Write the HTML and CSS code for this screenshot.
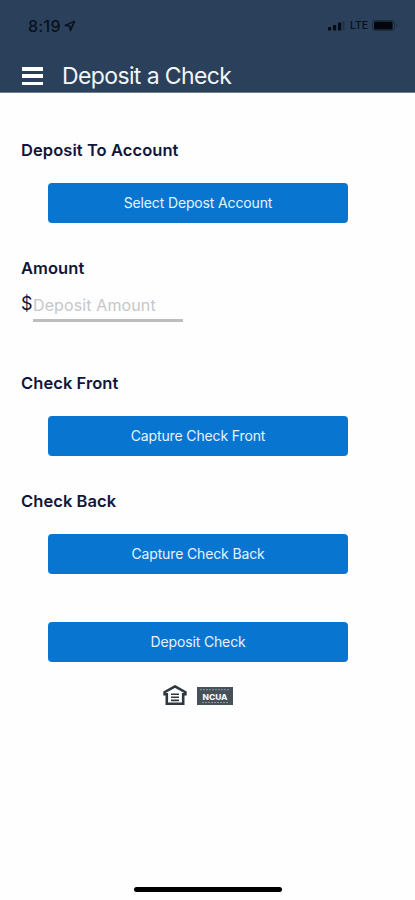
FILE: index.html
```html
<!DOCTYPE html>
<html lang="en">
<head>
<meta charset="utf-8">
<meta name="viewport" content="width=device-width, initial-scale=1">
<title>Deposit a Check</title>
<link rel="stylesheet" href="styles.css">
</head>
<body>
<div class="screen">
  <header class="header">
    <div class="status">
      <div class="status-time">
        <span class="time">8:19</span>
        <svg class="location" viewBox="0 0 12 12"><path d="M1.2 5.4 10.4 1.4 6.4 10.6 5.8 6.1Z"/></svg>
      </div>
      <div class="status-system">
        <svg class="signal" viewBox="0 0 17 10"><rect x="0" y="6" width="3.2" height="3.5" rx=".8"/><rect x="5" y="4" width="3.2" height="5.5" rx=".8"/><rect x="10" y="1.5" width="3.2" height="8" rx=".8"/><rect class="faint" x="14.6" y="0" width="2" height="9.5" rx=".8"/></svg>
        <span class="network">LTE</span>
        <svg class="battery" viewBox="0 0 26 11"><rect class="shell" x=".5" y=".5" width="22" height="10" rx="2.5"/><rect x="2" y="1.6" width="18.6" height="7.8" rx="1.2"/><path class="faint" d="M24 3.8c2 .5 2 2.900 0 3.400z"/></svg>
      </div>
    </div>
    <div class="titlebar">
      <button class="menu" aria-label="Menu"><i></i><i></i><i></i></button>
      <h1 class="title">Deposit a Check</h1>
    </div>
  </header>
  <main class="form">
    <section class="field">
      <h2 class="label">Deposit To Account</h2>
      <button class="action">Select Depost Account</button>
    </section>
    <section class="field amount">
      <h2 class="label">Amount</h2>
      <div class="amount-row">
        <span class="currency">$</span>
        <input class="amount-input" type="text" placeholder="Deposit Amount" aria-label="Deposit Amount">
      </div>
    </section>
    <section class="field">
      <h2 class="label">Check Front</h2>
      <button class="action">Capture Check Front</button>
    </section>
    <section class="field">
      <h2 class="label">Check Back</h2>
      <button class="action">Capture Check Back</button>
    </section>
    <button class="action submit">Deposit Check</button>
    <div class="badges">
      <svg class="housing" viewBox="0 0 24 21"><path class="roof" d="M1.600 9.300V7.200L12 1.400 22.400 7.200V9.300H20.200V18.800H3.800V9.300Z"/><path class="lines" d="M8 9.200h8M8 12.300h8M8 15.400h8"/></svg>
      <svg class="ncua" viewBox="0 0 36 18"><rect class="plate" width="36" height="18"/><path class="fine" d="M3 2.700h30M5 15.500h26"/><text x="18" y="12.700" text-anchor="middle" textLength="25" lengthAdjust="spacingAndGlyphs">NCUA</text></svg>
    </div>
  </main>
  <footer class="home"><div class="home-bar"></div></footer>
</div>
</body>
</html>
```
FILE: styles.css
```css
* { box-sizing: border-box; }
body { margin: 0; font-family: Inter, "Liberation Sans", sans-serif; color: #10163a; background: #fefefe; }
button { font: inherit; border: 0; padding: 0; }
h1, h2 { margin: 0; }
.screen { width: 415px; height: 900px; display: flex; flex-direction: column; overflow: hidden; }
.header { height: 93px; flex: none; background: #2b405b; border-bottom: 1px solid #6f7d8d; }
.status { height: 58px; padding: 15px 17px 0 28px; display: flex; justify-content: space-between; color: #07101b; }
.status-time, .status-system { height: 21px; display: flex; align-items: center; }
.time { font-size: 16px; font-weight: 500; letter-spacing: .3px; width: 36px; white-space: nowrap; }
.location { width: 12px; height: 12px; fill: none; stroke: #07101b; stroke-width: 1.5; stroke-linejoin: round; }
.signal { width: 17px; height: 10px; margin-right: 5px; fill: #050a12; }
.network { font-size: 10.500px; font-weight: 500; width: 22px; }
.battery { width: 26px; height: 11px; fill: #02060b; }
.shell { fill: none; stroke: #1c2c3f; }
.faint { fill: #203247; }
.titlebar { height: 35px; padding: 1px 0 0 22px; display: flex; align-items: center; }
.menu { width: 21px; height: 18px; display: flex; flex-direction: column; justify-content: space-between; background: none; }
.menu i { display: block; height: 3.500px; background: #fff; }
.title { margin-left: 19px; font-size: 23px; line-height: 34px; font-weight: 400; letter-spacing: -.62px; color: #f2f5f9; white-space: nowrap; }
.form { flex: 1; padding: 45px 21px 0; }
.field { height: 118px; }
.amount { height: 115px; }
.label { height: 24px; line-height: 24px; font-size: 16.500px; font-weight: 600; letter-spacing: .07px; white-space: nowrap; }
.action { display: block; width: 300px; height: 40px; margin: 21px 0 0 27px; border-radius: 4px; background: #0875d1; color: #e6f3ff; font-size: 14px; line-height: 40px; letter-spacing: -.14px; text-align: center; }
.amount-row { display: flex; height: 42px; }
.currency { width: 12px; font-size: 18px; line-height: 48px; }
.amount-input { width: 150px; height: 42px; border: 0; border-bottom: 3px solid #bdbdbd; border-radius: 0; padding: 10px 0 0; background: transparent; font: 400 16px Inter, "Liberation Sans", sans-serif; letter-spacing: .12px; outline: 0; }
.amount-input::placeholder { color: #c6c6c8; opacity: 1; }
.submit { margin-top: 15px; }
.badges { display: flex; align-items: center; gap: 10px; margin: 23px 0 0 142px; }
.housing { width: 24px; height: 21px; fill: none; stroke: #2d3742; }
.roof { stroke-width: 2.600; }
.lines { stroke-width: 1.600; }
.ncua { width: 36px; height: 18px; }
.plate { fill: #47515c; }
.fine { fill: none; stroke: #8b949c; stroke-width: 1; stroke-dasharray: 2 1; }
.ncua text { fill: #f2f4f5; font: 800 8px Inter, sans-serif; }
.home { height: 13px; flex: none; display: flex; justify-content: center; }
.home-bar { width: 148px; height: 5px; border-radius: 3px; background: #000; }
```
